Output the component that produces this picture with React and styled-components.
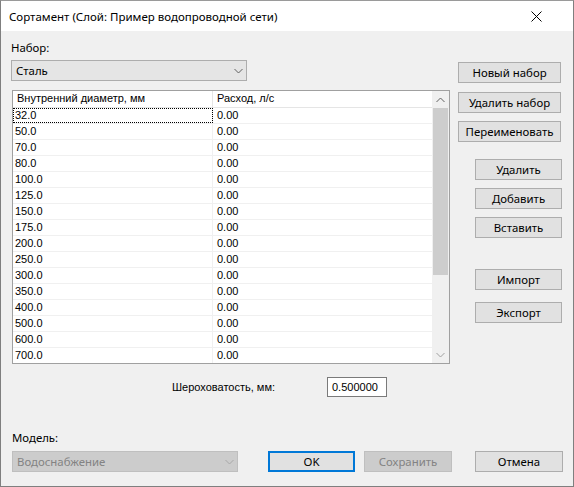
import React from "react";
import styled, { createGlobalStyle } from "styled-components";

const Global = createGlobalStyle`
  html, body { margin: 0; padding: 0; background: #ffffff; }
  * { box-sizing: border-box; }
  body { font-family: "Noto Sans", "Open Sans", sans-serif; font-size: 11.4px; color: #000; }
`;

const UI = `"Noto Sans", "Open Sans", sans-serif`;
const GRID = `"Liberation Sans", Arial, sans-serif`;

const Window = styled.div`
  width: 574px;
  height: 487px;
  border: 1px solid #7f7f7f;
  border-top-color: #9a9a9a;
  display: flex;
  flex-direction: column;
  background: #f0f0f0;
`;

const TitleBar = styled.div`
  height: 30px;
  background: #ffffff;
  display: flex;
  align-items: center;
  padding-left: 8px;
  font-family: ${UI};
  font-size: 11.5px;
  color: #000;
`;

const Title = styled.div`
  flex: 1;
  white-space: nowrap;
`;

const CloseBox = styled.div`
  width: 46px;
  height: 30px;
  margin-right: 14px;
  display: flex;
  align-items: center;
  justify-content: center;
`;

const Body = styled.div`
  flex: 1;
  display: flex;
  flex-direction: column;
  padding: 9px 0 14px 10px;
`;

const Top = styled.div`
  display: flex;
`;

const LeftPane = styled.div`
  width: 439px;
  display: flex;
  flex-direction: column;
`;

const Label = styled.div`
  font-family: ${UI};
  font-size: 11.4px;
  line-height: 16px;
  height: 16px;
  white-space: nowrap;
`;

const FieldLabel = styled.div`
  width: 155px;
  font-family: ${GRID};
  font-size: 11px;
  line-height: 16px;
  white-space: nowrap;
`;

const Combo = styled.div`
  margin-top: ${(p) => p.$mt || 0}px;
  width: ${(p) => p.$w}px;
  height: 21px;
  border: 1px solid ${(p) => (p.$disabled ? "#bfbfbf" : "#adadad")};
  background: ${(p) => (p.$disabled ? "#cccccc" : "#e5e5e5")};
  color: ${(p) => (p.$disabled ? "#838383" : "#000")};
  display: flex;
  align-items: center;
  padding: 0 3px 0 4px;
  font-family: ${UI};
  font-size: 11.4px;
`;

const ComboText = styled.span`
  flex: 1;
  white-space: nowrap;
`;

const Table = styled.div`
  margin-top: 9px;
  margin-left: 1px;
  width: 438px;
  height: 274px;
  border: 1px solid #a0a0a0;
  background: #ffffff;
  display: flex;
  overflow: hidden;
`;

const GridArea = styled.div`
  width: 419px;
  display: flex;
  flex-direction: column;
  overflow: hidden;
`;

const HeaderRow = styled.div`
  display: grid;
  grid-template-columns: 200px 219px;
  height: 17px;
  border-bottom: 1px solid #e5e5e5;
  flex-shrink: 0;
`;

const HeaderCell = styled.div`
  font-family: ${GRID};
  font-size: 11px;
  line-height: 15px;
  padding-left: 4px;
  border-right: ${(p) => (p.$first ? "1px solid #e5e5e5" : "none")};
  white-space: nowrap;
  color: #000;
`;

const Row = styled.div`
  display: grid;
  grid-template-columns: 200px 219px;
  height: 16px;
  border-bottom: 1px solid #f0f0f0;
  flex-shrink: 0;
`;

const Cell = styled.div`
  font-family: ${GRID};
  font-size: 11px;
  line-height: 15px;
  padding-left: ${(p) => (p.$first ? 2 : 4)}px;
  border-right: ${(p) => (p.$first ? "1px solid #f0f0f0" : "none")};
  color: #000;
  white-space: nowrap;
  outline: ${(p) => (p.$focus ? "1px dotted #000" : "none")};
  outline-offset: -1px;
`;

const ScrollBar = styled.div`
  width: 17px;
  background: #f0f0f0;
  display: flex;
  flex-direction: column;
  align-items: center;
`;

const ScrollArrow = styled.div`
  height: 17px;
  width: 17px;
  display: flex;
  align-items: center;
  justify-content: center;
`;

const ScrollTrack = styled.div`
  flex: 1;
  width: 100%;
  display: flex;
  justify-content: center;
`;

const Thumb = styled.div`
  width: 15px;
  height: 167px;
  background: #cdcdcd;
`;

const RoughRow = styled.div`
  margin-top: 13px;
  display: flex;
  align-items: center;
  padding-left: 161px;
  height: 20px;
`;

const Input = styled.div`
  width: 60px;
  height: 20px;
  border: 1px solid #7a7a7a;
  background: #fff;
  font-family: ${GRID};
  font-size: 11px;
  line-height: 18px;
  padding-left: 4px;
`;

const RightPane = styled.div`
  margin-left: 8px;
  display: flex;
  flex-direction: column;
  align-items: flex-start;
  padding-top: 22px;
`;

const Button = styled.div`
  margin-top: ${(p) => p.$mt || 0}px;
  margin-left: ${(p) => p.$ml || 0}px;
  width: ${(p) => p.$w}px;
  height: 21px;
  border: ${(p) => (p.$default ? "2px solid #0078d7" : p.$disabled ? "1px solid #bfbfbf" : "1px solid #adadad")};
  background: ${(p) => (p.$disabled ? "#cccccc" : "#e1e1e1")};
  color: ${(p) => (p.$disabled ? "#838383" : "#000")};
  font-family: ${UI};
  font-size: 11.4px;
  display: flex;
  align-items: center;
  justify-content: center;
  white-space: nowrap;
`;

const Bottom = styled.div`
  margin-top: auto;
  display: flex;
  align-items: flex-end;
`;

const ModelGroup = styled.div`
  display: flex;
  flex-direction: column;
  margin-left: 1px;
`;

const Chevron = ({ color = "#606060", up }) => (
  <svg width="9" height="6" viewBox="0 0 9 6">
    <polyline
      points={up ? "0.5,5 4.5,1 8.5,5" : "0.5,1 4.5,5 8.5,1"}
      fill="none"
      stroke={color}
      strokeWidth="1"
    />
  </svg>
);

const diameters = [
  "32.0", "50.0", "70.0", "80.0", "100.0", "125.0", "150.0", "175.0",
  "200.0", "250.0", "300.0", "350.0", "400.0", "500.0", "600.0", "700.0",
];

export default function App() {
  return (
    <>
      <Global />
      <Window>
        <TitleBar>
          <Title>Сортамент (Слой: Пример водопроводной сети)</Title>
          <CloseBox>
            <svg width="11" height="11" viewBox="0 0 11 11">
              <line x1="0.5" y1="0.5" x2="10.5" y2="10.5" stroke="#000" strokeWidth="1" />
              <line x1="10.5" y1="0.5" x2="0.5" y2="10.5" stroke="#000" strokeWidth="1" />
            </svg>
          </CloseBox>
        </TitleBar>
        <Body>
          <Top>
            <LeftPane>
              <Label>Набор:</Label>
              <Combo $mt={4} $w={236}>
                <ComboText>Сталь</ComboText>
                <Chevron />
              </Combo>
              <Table>
                <GridArea>
                  <HeaderRow>
                    <HeaderCell $first>Внутренний диаметр, мм</HeaderCell>
                    <HeaderCell>Расход, л/с</HeaderCell>
                  </HeaderRow>
                  {diameters.map((d, i) => (
                    <Row key={d}>
                      <Cell $first $focus={i === 0}>{d}</Cell>
                      <Cell>0.00</Cell>
                    </Row>
                  ))}
                </GridArea>
                <ScrollBar>
                  <ScrollArrow>
                    <Chevron up />
                  </ScrollArrow>
                  <ScrollTrack>
                    <Thumb />
                  </ScrollTrack>
                  <ScrollArrow>
                    <Chevron color="#a0a0a0" />
                  </ScrollArrow>
                </ScrollBar>
              </Table>
              <RoughRow>
                <FieldLabel>Шероховатость, мм:</FieldLabel>
                <Input>0.500000</Input>
              </RoughRow>
            </LeftPane>
            <RightPane>
              <Button $w={103} $mt={0}>Новый набор</Button>
              <Button $w={103} $mt={9}>Удалить набор</Button>
              <Button $w={103} $mt={8}>Переименовать</Button>
              <Button $w={87} $ml={17} $mt={17}>Удалить</Button>
              <Button $w={87} $ml={17} $mt={8}>Добавить</Button>
              <Button $w={87} $ml={17} $mt={8}>Вставить</Button>
              <Button $w={87} $ml={17} $mt={31}>Импорт</Button>
              <Button $w={87} $ml={17} $mt={12}>Экспорт</Button>
            </RightPane>
          </Top>
          <Bottom>
            <ModelGroup>
              <Label>Модель:</Label>
              <Combo $mt={5} $w={226} $disabled>
                <ComboText>Водоснабжение</ComboText>
                <Chevron color="#a8a8a8" />
              </Combo>
            </ModelGroup>
            <Button $w={87} $ml={30} $default>OK</Button>
            <Button $w={88} $ml={9} $disabled>Сохранить</Button>
            <Button $w={88} $ml={23}>Отмена</Button>
          </Bottom>
        </Body>
      </Window>
    </>
  );
}
